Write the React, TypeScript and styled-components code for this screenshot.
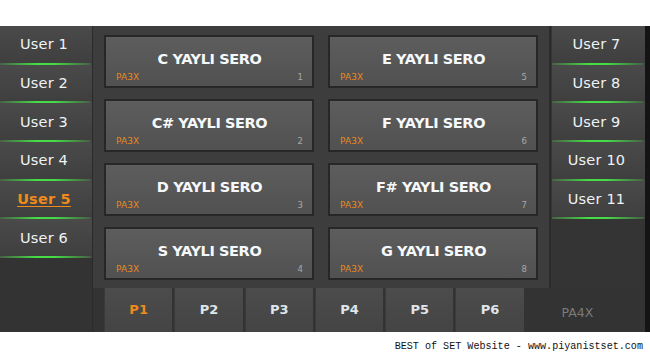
import styled, { createGlobalStyle } from "styled-components";

const GlobalStyle = createGlobalStyle`
  html, body {
    margin: 0;
    padding: 0;
    background: #ffffff;
  }
`;

const leftUsers = ["User 1", "User 2", "User 3", "User 4", "User 5", "User 6"];
const rightUsers = ["User 7", "User 8", "User 9", "User 10", "User 11"];
const tiles = [
  { name: "C YAYLI SERO", no: 1 },
  { name: "E YAYLI SERO", no: 5 },
  { name: "C# YAYLI SERO", no: 2 },
  { name: "F YAYLI SERO", no: 6 },
  { name: "D YAYLI SERO", no: 3 },
  { name: "F# YAYLI SERO", no: 7 },
  { name: "S YAYLI SERO", no: 4 },
  { name: "G YAYLI SERO", no: 8 },
];
const pages = ["P1", "P2", "P3", "P4", "P5", "P6"];

const App = () => {
  return (
    <Page>
      <GlobalStyle />
      <TopGap />
      <Panel>
        <UserColumn>
          {leftUsers.map((u) => (
            <UserButton key={u} active={u === "User 5"}>
              {u}
            </UserButton>
          ))}
        </UserColumn>
        <MainArea>
          <TopRow>
            <TileFrame>
              {tiles.map((t) => (
                <Tile key={t.no}>
                  <TileName>{t.name}</TileName>
                  <TileFoot>
                    <Model>PA3X</Model>
                    <TileNo>{t.no}</TileNo>
                  </TileFoot>
                </Tile>
              ))}
            </TileFrame>
            <RightColumn>
              {rightUsers.map((u) => (
                <UserButton key={u} active={false}>
                  {u}
                </UserButton>
              ))}
            </RightColumn>
          </TopRow>
          <TabBar>
            {pages.map((p) => (
              <Tab key={p} active={p === "P1"}>
                {p}
              </Tab>
            ))}
            <Brand>PA4X</Brand>
          </TabBar>
        </MainArea>
      </Panel>
      <Footer>BEST of SET Website - www.piyanistset.com</Footer>
    </Page>
  );
};

const Page = styled.div`
  width: 650px;
  height: 360px;
  background: #fff;
  overflow: hidden;
`;

const TopGap = styled.div`
  height: 26px;
`;

const Panel = styled.div`
  display: flex;
  height: 306px;
  background: #363636;
  border-right: 5px solid #141414;
`;

const UserColumn = styled.div`
  width: 92px;
  display: flex;
  flex-direction: column;
  background: #333;
  border-right: 1px solid #2a2a2a;
`;

const UserButton = styled.div<{ active: boolean }>`
  height: 36.7px;
  display: flex;
  align-items: center;
  justify-content: center;
  padding-right: 2px;
  background: linear-gradient(#4a4a4a, #3f3f3f);
  border-right: 2px solid #2e2e2e;
  border-bottom: 2px solid transparent;
  border-image: linear-gradient(
      90deg,
      rgba(60, 190, 60, 0.2),
      #45dc45 40%,
      #45dc45 60%,
      rgba(60, 190, 60, 0.2)
    )
    0 0 1 0;
  font-family: "DejaVu Sans", Verdana, sans-serif;
  font-size: 14.5px;
  letter-spacing: 0.2px;
  color: ${({ active }) => (active ? "#f08a1c" : "#eef3f6")};
  font-weight: ${({ active }) => (active ? "bold" : "normal")};
  text-decoration: ${({ active }) => (active ? "underline" : "none")};
  text-underline-offset: 2px;
`;

const MainArea = styled.div`
  flex: 1;
  display: flex;
  flex-direction: column;
`;

const TopRow = styled.div`
  display: flex;
  height: 262px;
`;

const TileFrame = styled.div`
  width: 456px;
  box-sizing: border-box;
  padding: 9px 10px 8px 11px;
  background: #3d3d3d;
  display: grid;
  grid-template-columns: 210px 210px;
  grid-auto-rows: 53px;
  column-gap: 14px;
  row-gap: 11px;
`;

const Tile = styled.div`
  box-sizing: border-box;
  display: flex;
  flex-direction: column;
  border: 2px solid #272727;
  background: linear-gradient(#5d5d5d, #515151);
  padding: 4px 9px 3px 10px;
`;

const TileName = styled.div`
  flex: 1;
  display: flex;
  align-items: center;
  justify-content: center;
  padding-top: 6px;
  font-family: "DejaVu Sans", Verdana, sans-serif;
  font-weight: bold;
  font-size: 14.5px;
  letter-spacing: -0.4px;
  color: #f6f9fb;
`;

const TileFoot = styled.div`
  display: flex;
  justify-content: space-between;
  align-items: center;
  height: 12px;
`;

const Model = styled.span`
  font-family: "DejaVu Sans", Verdana, sans-serif;
  font-size: 9px;
  letter-spacing: 0.1px;
  color: #e8881e;
`;

const TileNo = styled.span`
  font-family: "DejaVu Sans", Verdana, sans-serif;
  font-size: 8.5px;
  color: #a8a8a8;
`;

const RightColumn = styled.div`
  flex: 1;
  display: flex;
  flex-direction: column;
  background: #343434;
  border-left: 2px solid #2c2c2c;
  padding-left: 1px;
`;

const TabBar = styled.div`
  flex: 1;
  display: flex;
  padding-left: 11px;
  background: #333;
`;

const Tab = styled.div<{ active: boolean }>`
  width: 70.3px;
  box-sizing: border-box;
  display: flex;
  align-items: center;
  justify-content: center;
  padding-bottom: 1px;
  background: linear-gradient(#4c4c4c, #444);
  border-left: 1px solid #3a3a3a;
  border-right: 2px solid #333;
  font-family: "DejaVu Sans", Verdana, sans-serif;
  font-weight: bold;
  font-size: 13px;
  color: ${({ active }) => (active ? "#f08a1c" : "#dfe5ea")};
`;

const Brand = styled.div`
  flex: 1;
  display: flex;
  align-items: center;
  justify-content: center;
  padding-top: 4px;
  padding-right: 16px;
  font-family: "DejaVu Sans", Verdana, sans-serif;
  font-size: 12.5px;
  color: #7a7a7a;
`;

const Footer = styled.div`
  height: 28px;
  display: flex;
  align-items: center;
  justify-content: flex-end;
  padding-right: 7px;
  font-family: "Liberation Mono", "DejaVu Sans Mono", monospace;
  font-size: 10.1px;
  color: #111;
`;

export default App;
